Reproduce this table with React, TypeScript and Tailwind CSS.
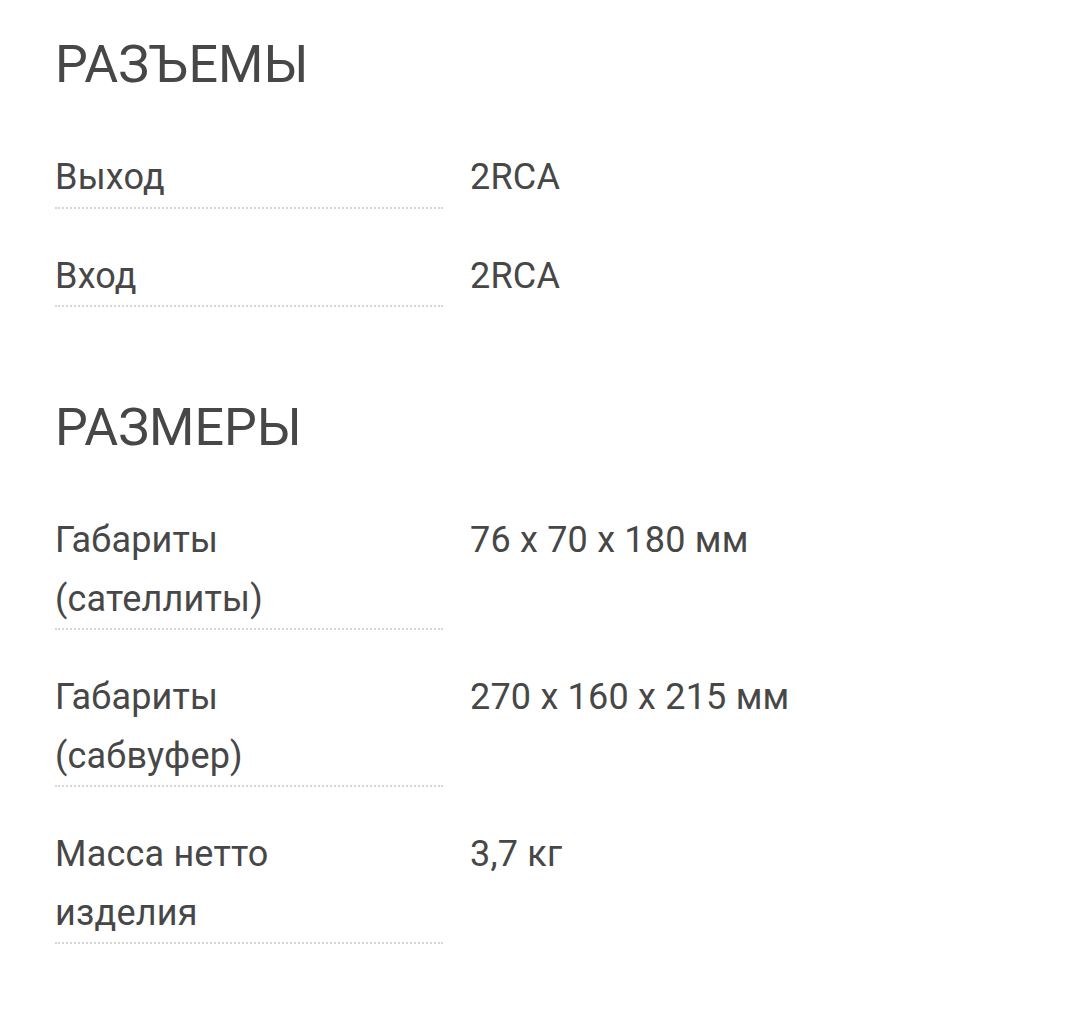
const sections = [
    {
        title: "РАЗЪЕМЫ",
        rows: [
            { label: "Выход", value: "2RCA" },
            { label: "Вход", value: "2RCA" },
        ],
    },
    {
        title: "РАЗМЕРЫ",
        rows: [
            { label: "Габариты (сателлиты)", value: "76 x 70 x 180 мм" },
            { label: "Габариты (сабвуфер)", value: "270 x 160 x 215 мм" },
            { label: "Масса нетто изделия", value: "3,7 кг" },
        ],
    },
];

const App = () => {
    return (
        <div className="min-h-[1021px] w-[1080px] bg-white pl-[55px] pt-[34px] text-[#474747] font-['Roboto',sans-serif]">
            {sections.map((section, i) => (
                <section key={section.title} className={i > 0 ? "mt-[90px]" : ""}>
                    <h2 className="text-[52px] leading-[62px] font-normal">
                        {section.title}
                    </h2>
                    <div className="mt-[14px] flex flex-col">
                        {section.rows.map(row => (
                            <div key={row.label} className="mt-[38px] flex items-start gap-[27px] text-[36px] leading-[58.5px] tracking-[0.2px]">
                                <div className="w-[388px] pr-[48px] border-b-2 border-dotted border-[#d6d6d6]">
                                    {row.label}
                                </div>
                                <div>{row.value}</div>
                            </div>
                        ))}
                    </div>
                </section>
            ))}
        </div>
    );
};

export default App;
